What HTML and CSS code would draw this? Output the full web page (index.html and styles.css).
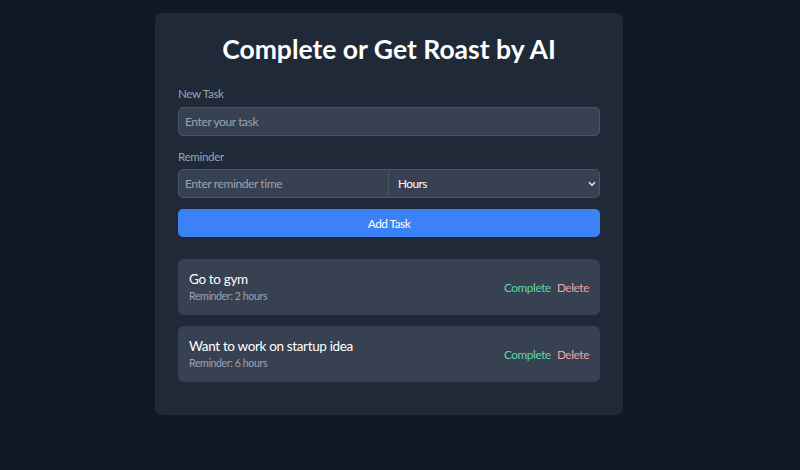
FILE: index.html
```html
<!DOCTYPE html>
<html lang="en">
<head>
<meta charset="utf-8">
<title>Complete or Get Roast by AI</title>
<link rel="stylesheet" href="styles.css">
</head>
<body>
<main class="card">
  <h1 class="title">Complete or Get Roast by AI</h1>
  <div class="field">
    <label class="label">New Task</label>
    <input class="input" type="text" placeholder="Enter your task">
  </div>
  <div class="field">
    <label class="label">Reminder</label>
    <div class="row">
      <input class="input left" type="text" placeholder="Enter reminder time">
      <div class="select">
        <span>Hours</span>
        <svg class="chev" width="8" height="6" viewBox="0 0 8 6"><path d="M1 1.2 L4 4.2 L7 1.2" fill="none" stroke="#e5e7eb" stroke-width="1.6"/></svg>
      </div>
    </div>
  </div>
  <button class="btn">Add Task</button>
  <ul class="list">
    <li class="item">
      <div class="info">
        <div class="name">Go to gym</div>
        <div class="meta">Reminder: 2 hours</div>
      </div>
      <div class="actions"><span class="ok">Complete</span><span class="del">Delete</span></div>
    </li>
    <li class="item">
      <div class="info">
        <div class="name">Want to work on startup idea</div>
        <div class="meta">Reminder: 6 hours</div>
      </div>
      <div class="actions"><span class="ok">Complete</span><span class="del">Delete</span></div>
    </li>
  </ul>
</main>
</body>
</html>
```
FILE: styles.css
```css
* { box-sizing: border-box; }
html, body { margin: 0; padding: 0; }
body {
  background: #111827;
  font-family: "Lato", "Noto Sans", sans-serif;
  color: #fff;
  min-height: 470px;
  padding-top: 13px;
}
.card {
  width: 468px;
  margin-left: 155px;
  background: #1f2937;
  border-radius: 7px;
  padding: 20px 23px 33px;
  display: flex;
  flex-direction: column;
}
.title {
  margin: 0 0 19px;
  text-align: center;
  font-size: 26.5px;
  line-height: 32px;
  font-weight: 700;
  color: #fff;
}
.field { display: flex; flex-direction: column; margin-bottom: 11px; }
.label {
  font-size: 11.6px;
  letter-spacing: -0.35px;
  line-height: 18px;
  color: #9ca3af;
  margin-top: 1px;
  margin-bottom: 4px;
}
.field + .field .label { margin-bottom: 3px; }
.input {
  height: 29px;
  background: #374151;
  border: 1px solid #4b5563;
  border-radius: 5px;
  padding: 0 6px;
  font-family: inherit;
  font-size: 12px;
  letter-spacing: -0.4px;
  color: #fff;
  outline: none;
}
.input::placeholder { color: #9ca3af; }
.row { display: flex; }
.left { width: 211px; border-radius: 5px 0 0 5px; border-right: 1px solid #4b5563; }
.select {
  flex: 1;
  height: 29px;
  background: #374151;
  border: 1px solid #4b5563;
  border-left: none;
  border-radius: 0 5px 5px 0;
  display: flex;
  align-items: center;
  justify-content: space-between;
  padding: 0 3px 0 9px;
  font-size: 11.8px;
  letter-spacing: -0.5px;
  color: #fff;
}
.btn {
  height: 28px;
  background: #3b82f6;
  border: none;
  border-radius: 5px;
  color: #fff;
  font-family: inherit;
  font-size: 11.8px;
  letter-spacing: -0.5px;
  margin-top: 0;
}
.list {
  list-style: none;
  margin: 22px 0 0;
  padding: 0;
  display: flex;
  flex-direction: column;
  gap: 11px;
}
.item {
  height: 56px;
  background: #374151;
  border-radius: 6px;
  padding: 0 11px;
  display: flex;
  align-items: center;
  justify-content: space-between;
}
.name { font-size: 13.5px; letter-spacing: -0.35px; line-height: 19px; color: #fff; }
.meta { font-size: 10.6px; letter-spacing: -0.4px; line-height: 15px; color: #9ca3af; }
.actions { display: flex; gap: 6px; font-size: 11.8px; letter-spacing: -0.4px; }
.ok { color: #5fd6a4; }
.del { color: #f4a0aa; }
```
